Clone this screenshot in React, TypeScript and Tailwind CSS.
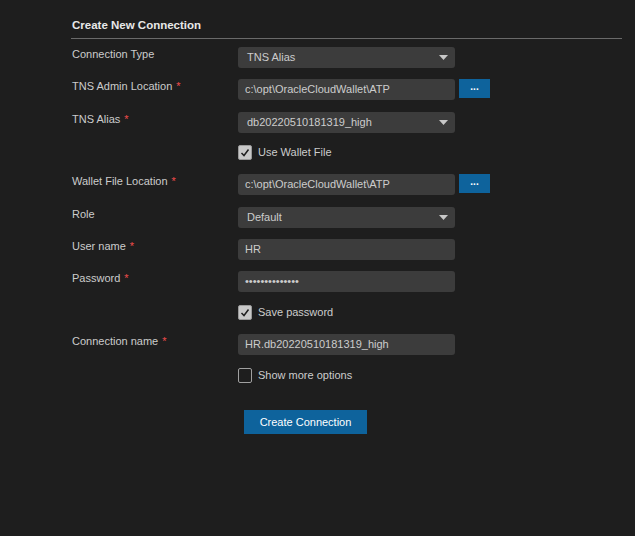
import React from "react";

const font = { fontFamily: '"Liberation Sans", Arial, sans-serif' };

function Req() {
  return <span className="text-[#f14c4c] ml-[4px]">*</span>;
}

function Label({ children, req }: { children: React.ReactNode; req?: boolean }) {
  return (
    <div className="w-[166px] shrink-0 text-[11px] leading-[14px] text-[#cccccc]">
      {children}
      {req && <Req />}
    </div>
  );
}

function Select({ value }: { value: string }) {
  return (
    <div className="w-[217px] h-[21px] rounded-[3px] bg-[#3c3c3c] flex items-center justify-between pl-[9px] pr-[7px] text-[11px] text-[#cccccc]">
      <span>{value}</span>
      <svg width="9" height="5" viewBox="0 0 9 5">
        <path d="M0 0 L9 0 L4.5 5 Z" fill="#c8c8c8" />
      </svg>
    </div>
  );
}

function Input({ value }: { value: string }) {
  return (
    <div className="w-[217px] h-[21px] rounded-[3px] bg-[#3c3c3c] flex items-center pl-[7px] text-[11px] text-[#cccccc]">
      {value}
    </div>
  );
}

function Browse() {
  return (
    <div className="ml-[4px] w-[31px] h-[19px] bg-[#0e639c] flex items-center justify-center text-[10px] font-bold text-white leading-none pb-[3px]">
      ...
    </div>
  );
}

function Check({ checked, label }: { checked: boolean; label: string }) {
  return (
    <div className="flex items-center ml-[166px] h-[15px]">
      <div
        className={
          "w-[14px] h-[15px] rounded-[2px] flex items-center justify-center " +
          (checked ? "bg-[#c8c8c8] border border-[#9a9a9a]" : "border border-[#a0a0a0]")
        }
      >
        {checked && (
          <svg width="10" height="9" viewBox="0 0 10 9">
            <path d="M1.5 5 L4 7.5 L8.5 1.5" stroke="#1e1e1e" strokeWidth="1.5" fill="none" />
          </svg>
        )}
      </div>
      <span className="ml-[6px] text-[11px] leading-[15px] text-[#cccccc]">{label}</span>
    </div>
  );
}

export default function App() {
  return (
    <div className="w-[635px] h-[536px] bg-[#1e1e1e] overflow-hidden" style={font}>
      <div className="pl-[71px] pr-[13px] pt-[18px]">
        <div className="text-[11.5px] font-bold text-[#e8e8e8] leading-[15px] pl-[1px]">Create New Connection</div>
        <div className="mt-[5px] h-px bg-[#6a6a6a] w-[551px]" />
        <div className="pl-[1px]">
          <div className="flex mt-[8px]">
            <Label>Connection Type</Label>
            <Select value="TNS Alias" />
          </div>
          <div className="flex mt-[11px]">
            <Label req>TNS Admin Location</Label>
            <Input value="c:\opt\OracleCloudWallet\ATP" />
            <Browse />
          </div>
          <div className="flex mt-[12px]">
            <Label req>TNS Alias</Label>
            <Select value="db20220510181319_high" />
          </div>
          <div className="mt-[12px]">
            <Check checked label="Use Wallet File" />
          </div>
          <div className="flex mt-[14px]">
            <Label req>Wallet File Location</Label>
            <Input value="c:\opt\OracleCloudWallet\ATP" />
            <Browse />
          </div>
          <div className="flex mt-[12px]">
            <Label>Role</Label>
            <Select value="Default" />
          </div>
          <div className="flex mt-[11px]">
            <Label req>User name</Label>
            <Input value="HR" />
          </div>
          <div className="flex mt-[11px]">
            <Label req>Password</Label>
            <Input value="••••••••••••••" />
          </div>
          <div className="mt-[13px]">
            <Check checked label="Save password" />
          </div>
          <div className="flex mt-[14px]">
            <Label req>Connection name</Label>
            <Input value="HR.db20220510181319_high" />
          </div>
          <div className="mt-[13px]">
            <Check checked={false} label="Show more options" />
          </div>
          <div className="mt-[27px] ml-[172px]">
            <div className="w-[123px] h-[24px] bg-[#0e639c] flex items-center justify-center text-[11px] text-white">
              Create Connection
            </div>
          </div>
        </div>
      </div>
    </div>
  );
}
